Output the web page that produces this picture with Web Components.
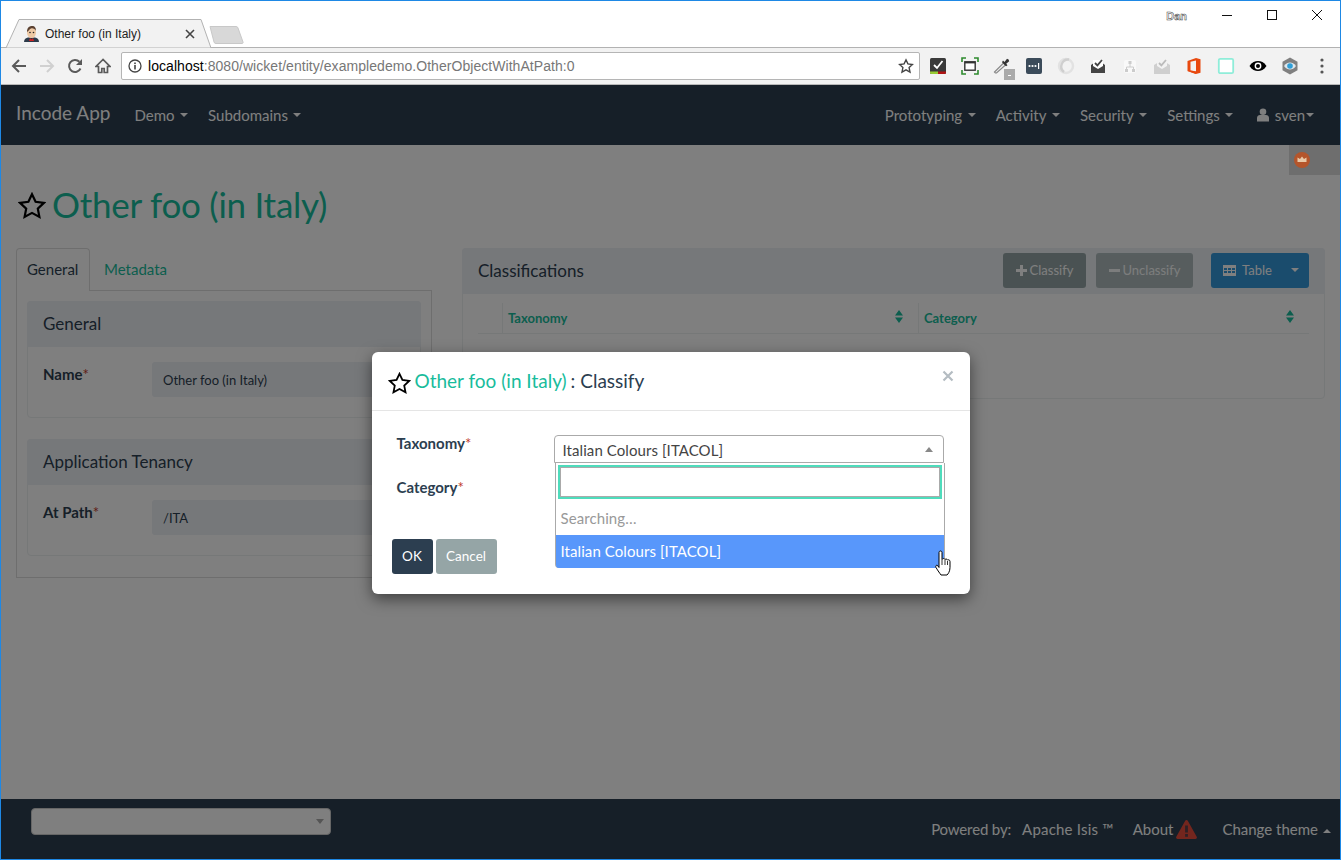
<!DOCTYPE html>
<html>
<head>
<meta charset="utf-8">
<title>Other foo (in Italy)</title>
<style>
    html, body { margin: 0; height: 100%; }
    body { font-family: Lato, "Liberation Sans", sans-serif; font-size: 15px; color: #2c3e50; overflow: hidden; }
</style>
</head>
<body>
<app-window>
    <browser-chrome slot="chrome"></browser-chrome>
    <isis-page>
        <isis-navbar slot="nav"></isis-navbar>
        <entity-title slot="title">Other foo (in Italy)</entity-title>
        <entity-tabs slot="left">
            <field-panel heading="General" label="Name" value="Other foo (in Italy)"></field-panel>
            <field-panel heading="Application Tenancy" label="At Path" value="/ITA"></field-panel>
        </entity-tabs>
        <classifications-panel slot="right"></classifications-panel>
        <isis-footer slot="footer"></isis-footer>
        <classify-modal slot="modal"></classify-modal>
        <corner-tag slot="corner"></corner-tag>
    </isis-page>
</app-window>

<script>
const STAR = '<svg viewBox="0 0 28 27" style="display:block;width:100%;height:100%"><path d="M14 2.2l3.6 7.6 8.3 1.1-6.1 5.8 1.6 8.2-7.4-4-7.4 4 1.6-8.2-6.1-5.8 8.3-1.1z" fill="none" stroke="currentColor" stroke-width="2.2" stroke-linejoin="miter"/></svg>';

customElements.define('app-window', class extends HTMLElement {
    constructor() {
        super();
        this.attachShadow({ mode: 'open' }).innerHTML = `
            <style>
                :host { display: flex; flex-direction: column; box-sizing: border-box; width: 1341px; height: 860px; border: 1px solid #1e88e5; background: #fff; }
                ::slotted(isis-page) { flex: 1; min-height: 0; }
            </style>
            <slot name="chrome"></slot>
            <slot></slot>
        `;
    }
});

customElements.define('browser-chrome', class extends HTMLElement {
    constructor() {
        super();
        const ext = [
            // check tile
            '<rect x="2" y="2" width="16" height="16" rx="1.5" fill="#3a3a3a"/><path d="M2 15.5h8V18H3.5A1.5 1.5 0 0 1 2 16.5z" fill="#9c3"/><path d="M10 15.5h8v1a1.5 1.5 0 0 1-1.5 1.5H10z" fill="#b01515"/><path d="M6 9l3 3 5.5-7" fill="none" stroke="#fff" stroke-width="1.8"/>',
            // fullscreen frame
            '<path d="M2 6V2h4M14 2h4v4M18 14v4h-4M6 18H2v-4" fill="none" stroke="#2e8b2e" stroke-width="1.6"/><rect x="4.8" y="5.8" width="10.4" height="8.4" fill="#fff" stroke="#333" stroke-width="1.4"/><rect x="4.8" y="5.8" width="10.4" height="1.6" fill="#333"/>',
            // eyedropper with badge
            '<path d="M3.5 17l-1-1 9-9 2 2-9 8z" fill="#eee" stroke="#888" stroke-width="1.2"/><path d="M11 4.5l1.5 1.5 2.5-3.2 1.6.8.6 1.6-3 2.6 1.3 1.4-1.5 1-4-4z" fill="#333"/><rect x="12" y="13" width="11" height="11" fill="#aaa"/><rect x="16" y="19" width="3" height="1" fill="#fff"/>',
            // dots tile
            '<rect x="2" y="2" width="16" height="16" rx="2" fill="#3b4b5a"/><circle cx="5.5" cy="10" r="1.1" fill="#fff"/><circle cx="8.5" cy="10" r="1.1" fill="#fff"/><circle cx="11.5" cy="10" r="1.1" fill="#fff"/><rect x="14" y="7" width="1.2" height="6" fill="#fff"/>',
            // pale swirl
            '<circle cx="10" cy="10" r="7" fill="none" stroke="#e2e2e2" stroke-width="2.4"/><path d="M13 3.5A7 7 0 0 0 8 16" fill="none" stroke="#cfcfcf" stroke-width="2.4"/>',
            // open envelope dark
            '<path d="M3 9l7-5 7 5v8H3z" fill="#444"/><path d="M5 4h10v6l-5 3-5-3z" fill="#fff"/><path d="M7 7l2.4 2.4L14 4" fill="none" stroke="#444" stroke-width="1.8"/>',
            // pale sitemap
            '<rect x="4" y="4" width="12" height="13" rx="2" fill="#f9f9f9"/><path d="M10 8v3M6.5 14v-3h7v3" fill="none" stroke="#ccc"/><rect x="8.5" y="5" width="3" height="3" fill="#ccc"/><rect x="5" y="13" width="3" height="3" fill="#ccc"/><rect x="12" y="13" width="3" height="3" fill="#ccc"/>',
            // pale envelope
            '<path d="M2 9l8-5 8 5v9H2z" fill="#cfcfcf"/><path d="M5 4h10v6l-5 3-5-3z" fill="#f2f2f2"/><path d="M7 7l2.4 2.4L14 4" fill="none" stroke="#bbb" stroke-width="1.8"/>',
            // office
            '<path d="M3.5 5L12 2l4.5 1.2v13.6L12 18l-8.5-3z" fill="#e8490f"/><path d="M6.5 5.8L12 4.6v10.8l-5.5-1.2z" fill="#f2f2f2"/><path d="M3.5 15l8.5 3v-2.6z" fill="#e8490f"/>',
            // teal square
            '<rect x="2.8" y="2.8" width="14.4" height="14.4" rx="1.5" fill="#fff" stroke="#8fedd9" stroke-width="1.8"/>',
            // black eye
            '<path d="M1.5 10C4 6.2 7 5 10 5s6 1.2 8.500 5C16 13.800 13 15 10 15s-6-1.200-8.500-5z" fill="#000"/><circle cx="10" cy="10" r="3.4" fill="#fff"/><circle cx="10" cy="10" r="2" fill="#000"/>',
            // hexagon eye
            '<path d="M10 1.500l7.500 4.200v8.600L10 18.500l-7.500-4.200V5.700z" fill="#808080"/><path d="M4 10c2-2.600 4-3.500 6-3.500s4 .9 6 3.500c-2 2.600-4 3.500-6 3.500S6 12.600 4 10z" fill="#dfe8ee"/><circle cx="10" cy="10" r="2.800" fill="#2f9fd8"/>',
            // menu dots
            '<circle cx="10" cy="4" r="1.600" fill="#555"/><circle cx="10" cy="10" r="1.600" fill="#555"/><circle cx="10" cy="16" r="1.600" fill="#555"/>'
        ].map(s => `<span class="ext"><svg viewBox="0 0 20 20" width="20" height="20" style="overflow:visible">${s}</svg></span>`).join('');

        this.attachShadow({ mode: 'open' }).innerHTML = `
            <style>
                :host { display: block; font-family: "Liberation Sans", Arial, sans-serif; }
                .strip { display: flex; height: 47px; box-sizing: border-box; border-bottom: 1px solid #b2b2b2; align-items: flex-end; position: relative; }
                .tab { position: relative; box-sizing: border-box; width: 206px; height: 29px; margin-left: 4px; margin-bottom: -1px; display: flex; align-items: center; padding: 0 16px 0 19px; font-size: 12px; color: #222; }
                .tab > svg.bg { position: absolute; left: 0; top: 0; }
                .fav { position: relative; width: 15px; height: 16px; margin-right: 6px; }
                .title { position: relative; flex: 1; white-space: nowrap; }
                .close { position: relative; width: 10px; height: 10px; }
                .newtab { margin-left: -2px; margin-bottom: 3px; display: block; }
                .winbar { position: absolute; top: 0; right: 1px; height: 28px; display: flex; align-items: center; }
                .user { font-size: 11px; font-weight: 700; color: #fff; -webkit-text-stroke: .5px #444; margin-right: 17px; margin-top: 2px; }
                .win { width: 45px; height: 28px; display: flex; align-items: center; justify-content: center; }
                .tools { display: flex; align-items: center; height: 37px; box-sizing: border-box; background: #f2f2f2; padding: 0 2px 0 4px; border-bottom: 1px solid #b8b8b8; }
                .btn { width: 28px; height: 28px; display: flex; align-items: center; justify-content: center; }
                .omni { flex: 1; height: 28px; box-sizing: border-box; margin: 0 2px 0 4px; background: #fff; border: 1px solid #b5b5b5; border-radius: 2px; display: flex; align-items: center; padding: 0 5px 0 6px; font-size: 14px; color: #777; }
                .omni b { font-weight: 400; color: #000; }
                .omni .url { flex: 1; margin-left: 6px; white-space: nowrap; letter-spacing: .05px; }
                .ext { width: 32px; height: 32px; display: flex; align-items: center; justify-content: center; }
            </style>
            <div class="strip">
                <div class="tab">
                    <svg class="bg" width="206" height="29" viewBox="0 0 206 29"><path d="M1 29L14 .5H196L206 29z" fill="#f2f2f2" stroke="#b2b2b2"/><path d="M0 29.500H206" stroke="#f2f2f2"/></svg>
                    <svg class="fav" viewBox="0 0 15 16"><path d="M0 16c0-3 2-4 4-4.500h7c2 .5 4 1.500 4 4.500z" fill="#2c3a4a"/><path d="M6 12l1.500 1.500L9 12l1 3H5z" fill="#c22"/><ellipse cx="7.500" cy="6.500" rx="4.500" ry="5.500" fill="#eec9a5"/><path d="M3 6c0-4 2-6 5-6s4 2 4 5c-1-2-3-3-5-2.500C5.500 3 5 5 3 6z" fill="#5a4030"/><circle cx="6" cy="6.500" r=".8" fill="#222"/><circle cx="9.500" cy="6.500" r=".8" fill="#222"/></svg>
                    <span class="title">Other foo (in Italy)</span>
                    <svg class="close" viewBox="0 0 10 10"><path d="M1 1l8 8M9 1L1 9" stroke="#444" stroke-width="1.600"/></svg>
                </div>
                <svg class="newtab" width="36" height="18" viewBox="0 0 36 18"><path d="M1 .5H27a2 2 0 0 1 2 1.500L34 16a1 1 0 0 1-1 1.500H7a2 2 0 0 1-2-1.500z" fill="#d8d8d8" stroke="#c8c8c8"/></svg>
                <div class="winbar">
                    <span class="user">Dan</span>
                    <span class="win"><svg width="12" height="12" viewBox="0 0 12 12"><path d="M1 6.500h10" stroke="#111"/></svg></span>
                    <span class="win"><svg width="12" height="12" viewBox="0 0 12 12"><rect x="1.500" y="1.500" width="9" height="9" fill="none" stroke="#111"/></svg></span>
                    <span class="win"><svg width="12" height="12" viewBox="0 0 12 12"><path d="M1 1l10 10M11 1L1 11" stroke="#111"/></svg></span>
                </div>
            </div>
            <div class="tools">
                <span class="btn"><svg width="16" height="16" viewBox="0 0 16 16"><path d="M15 8H2M8 2L2 8l6 6" fill="none" stroke="#5a5a5a" stroke-width="2"/></svg></span>
                <span class="btn"><svg width="16" height="16" viewBox="0 0 16 16"><path d="M1 8h13M8 2l6 6-6 6" fill="none" stroke="#d0d0d0" stroke-width="2"/></svg></span>
                <span class="btn"><svg width="16" height="16" viewBox="0 0 16 16"><path d="M13.500 10.500A6 6 0 1 1 12.400 3.800" fill="none" stroke="#5a5a5a" stroke-width="2"/><path d="M15 1v6H9z" fill="#5a5a5a"/></svg></span>
                <span class="btn"><svg width="16" height="16" viewBox="0 0 16 16"><path d="M8 1.500L1 8.500h2.500v6h3.300v-4h2.400v4h3.300v-6H15z" fill="none" stroke="#5a5a5a" stroke-width="1.700"/></svg></span>
                <div class="omni">
                    <svg width="14" height="14" viewBox="0 0 14 14"><circle cx="7" cy="7" r="6" fill="none" stroke="#444" stroke-width="1.300"/><rect x="6.200" y="6" width="1.600" height="4.500" fill="#444"/><rect x="6.200" y="3.500" width="1.600" height="1.600" fill="#444"/></svg>
                    <span class="url"><b>localhost</b>:8080/wicket/entity/exampledemo.OtherObjectWithAtPath:0</span>
                    <svg width="16" height="16" viewBox="0 0 16 16"><path d="M8 1.800l1.900 4.100 4.500.6-3.300 3.100.9 4.500L8 11.900l-4 2.200.9-4.500-3.300-3.100 4.500-.6z" fill="none" stroke="#444" stroke-width="1.400"/></svg>
                </div>
                ${ext}
            </div>
        `;
    }
});

customElements.define('isis-page', class extends HTMLElement {
    constructor() {
        super();
        this.attachShadow({ mode: 'open' }).innerHTML = `
            <style>
                :host { display: flex; flex-direction: column; position: relative; background: #fff; }
                .main { flex: 1; padding: 40px 15px 0; }
                .cols { display: grid; grid-template-columns: 416px 863px; column-gap: 30px; align-items: start; }
                .backdrop { position: absolute; inset: 0; background: rgba(0, 0, 0, .5); display: flex; justify-content: center; padding-top: 267px; }
                .corner { position: absolute; right: 0; top: 60px; }
            </style>
            <slot name="nav"></slot>
            <div class="main">
                <slot name="title"></slot>
                <div class="cols">
                    <slot name="left"></slot>
                    <slot name="right"></slot>
                </div>
            </div>
            <slot name="footer"></slot>
            <div class="backdrop"><slot name="modal"></slot></div>
            <div class="corner"><slot name="corner"></slot></div>
        `;
    }
});

customElements.define('nav-item', class extends HTMLElement {
    constructor() {
        super();
        this.attachShadow({ mode: 'open' }).innerHTML = `
            <style>
                :host { display: inline-flex; align-items: center; padding: 0 10px; color: #fff; font-size: 15px; white-space: nowrap; }
                .caret { margin-left: 5.500px; width: 0; height: 0; border: 4px solid transparent; border-top-color: currentColor; border-bottom: 0; }
                :host([tight]) { margin-left: 3.500px; padding-right: 11px; }
                :host([tight]) .caret { margin-left: 1px; }
            </style>
            <slot></slot><span class="caret"></span>
        `;
    }
});

customElements.define('isis-navbar', class extends HTMLElement {
    constructor() {
        super();
        this.attachShadow({ mode: 'open' }).innerHTML = `
            <style>
                :host { display: flex; align-items: center; height: 60px; background: #2c3e50; padding: 0 15px; box-sizing: border-box; flex: none; }
                .brand { color: #fff; font-size: 19px; margin-right: 14px; position: relative; top: -3px; }
                .sp { flex: 1; }
                svg { margin-right: 6px; }
            </style>
            <span class="brand">Incode App</span>
            <nav-item>Demo</nav-item>
            <nav-item>Subdomains</nav-item>
            <span class="sp"></span>
            <nav-item>Prototyping</nav-item>
            <nav-item>Activity</nav-item>
            <nav-item>Security</nav-item>
            <nav-item>Settings</nav-item>
            <nav-item tight><svg width="12" height="14" viewBox="0 0 12 14"><circle cx="6" cy="3.800" r="3.300" fill="#fff"/><path d="M0 13.500V10c0-2 1.500-3 3-3h6c1.500 0 3 1 3 3v3.500z" fill="#fff"/></svg>sven</nav-item>
        `;
    }
});

customElements.define('entity-title', class extends HTMLElement {
    constructor() {
        super();
        this.attachShadow({ mode: 'open' }).innerHTML = `
            <style>
                :host { display: flex; align-items: center; box-sizing: border-box; height: 40px; padding-bottom: 2px; margin-bottom: 23px; font-size: 35px; letter-spacing: -.25px; color: #18bc9c; white-space: nowrap; }
                .star { width: 28px; height: 27px; margin: 2px 6px 0 2px; color: #000; }
            </style>
            <span class="star">${STAR}</span><slot></slot>
        `;
    }
});

customElements.define('entity-tabs', class extends HTMLElement {
    constructor() {
        super();
        this.attachShadow({ mode: 'open' }).innerHTML = `
            <style>
                :host { display: block; }
                .tabs { display: flex; height: 42px; }
                .tab { box-sizing: border-box; width: 74px; height: 43px; padding: 0 10px 2px; display: flex; align-items: center; background: #fff; border: 1px solid #ddd; border-bottom: 0; border-radius: 4px 4px 0 0; position: relative; }
                .tab.off { width: auto; background: none; border-color: transparent; color: #18bc9c; margin-left: 3px; }
                .pane { border: 1px solid #ddd; padding: 10px 10px 21px; display: flex; flex-direction: column; gap: 21px; }
            </style>
            <div class="tabs"><span class="tab">General</span><span class="tab off">Metadata</span></div>
            <div class="pane"><slot></slot></div>
        `;
    }
});

customElements.define('field-panel', class extends HTMLElement {
    constructor() {
        super();
        this.attachShadow({ mode: 'open' }).innerHTML = `
            <style>
                :host { display: block; border: 1px solid #ecf0f1; border-radius: 4px; }
                .head { box-sizing: border-box; margin: -1px -1px 0; padding: 0 16px 2px; display: flex; align-items: center; background: #ecf0f4; border-radius: 4px 4px 0 0; font-size: 17px; height: 46px; }
                .row { display: flex; padding: 15px 10px 20px 15px; }
                label { width: 109px; font-weight: 700; margin-top: 2px; line-height: 20px; }
                label i { color: #c0392b; font-style: normal; font-weight: 400; }
                .input { flex: 1; height: 35px; box-sizing: border-box; background: #ecf0f4; border-radius: 3px; padding: 0 11px; display: flex; align-items: center; font-size: 13px; }
            </style>
            <div class="head">${this.getAttribute('heading')}</div>
            <div class="row">
                <label>${this.getAttribute('label')}<i>*</i></label>
                <div class="input">${this.getAttribute('value')}</div>
            </div>
        `;
    }
});

customElements.define('action-button', class extends HTMLElement {
    constructor() {
        super();
        this.attachShadow({ mode: 'open' }).innerHTML = `
            <style>
                :host { display: inline-flex; align-items: center; justify-content: center; box-sizing: border-box; height: 35px; background: var(--bg, #95a5a6); color: #fff; border-radius: 3px; font-size: 13px; white-space: nowrap; opacity: var(--op, 1); padding: var(--pad, 0 13px); }
            </style>
            <slot></slot>
        `;
    }
});

customElements.define('classifications-panel', class extends HTMLElement {
    constructor() {
        super();
        const sort = '<svg width="8" height="13" viewBox="0 0 8 13"><path d="M4 0l4 5.500H0zM4 13L0 7.500h8z" fill="#18bc9c"/></svg>';
        this.attachShadow({ mode: 'open' }).innerHTML = `
            <style>
                :host { display: block; height: 151px; box-sizing: border-box; border: 1px solid #ecf0f1; border-radius: 4px; }
                .head { box-sizing: border-box; display: flex; align-items: center; height: 46px; margin: -1px -1px 0; padding: 0 16px 2px; background: #ecf0f4; border-radius: 4px 4px 0 0; font-size: 17px; }
                .title { flex: 1; }
                .gap { width: 10px; } .gap2 { width: 18px; }
                .ico { margin-right: 3px; flex: none; }
                .table { margin: 9px 15px 0; height: 30px; display: grid; grid-template-columns: 24px 416px 1fr; border-bottom: 1px solid #ecf0f1; }
                .th { border-left: 1px solid #ecf0f1; padding: 0 15px 0 5px; color: #18bc9c; font-size: 13px; font-weight: 700; display: flex; justify-content: space-between; align-items: center; }
                .th svg { margin-top: -3px; }
                .th:first-child { border: 0; }
            </style>
            <div class="head">
                <span class="title">Classifications</span>
                <action-button style="--pad:0;width:83px"><svg class="ico" width="11" height="11" viewBox="0 0 11 11"><path d="M4 0h3v4h4v3H7v4H4V7H0V4h4z" fill="#fff"/></svg>Classify</action-button>
                <span class="gap"></span>
                <action-button style="--op:.7;--pad:0;width:97px"><svg class="ico" width="11" height="11" viewBox="0 0 11 11"><path d="M0 4h11v3H0z" fill="#fff"/></svg>Unclassify</action-button>
                <span class="gap2"></span>
                <action-button style="--bg:#3498db;--pad:0 0 0 12px;width:98px;justify-content:flex-start"><svg class="ico" style="margin-right:6px" width="13" height="11" viewBox="0 0 13 11"><path d="M0 0h13v11H0zM1 3v2h3V3zm4 0v2h3V3zm4 0v2h3V3zM1 6v2h3V6zm4 0v2h3V6zm4 0v2h3V6z" fill="#fff" fill-rule="evenodd"/></svg>Table<span style="margin-left:19px;border:4px solid transparent;border-top-color:#fff;border-bottom:0"></span></action-button>
            </div>
            <div class="table">
                <div class="th"></div>
                <div class="th"><span>Taxonomy</span>${sort}</div>
                <div class="th"><span>Category</span>${sort}</div>
            </div>
        `;
    }
});

customElements.define('isis-footer', class extends HTMLElement {
    constructor() {
        super();
        this.attachShadow({ mode: 'open' }).innerHTML = `
            <style>
                :host { display: flex; align-items: center; height: 60px; flex: none; box-sizing: border-box; background: #2c3e50; padding: 0 9px 0 30px; color: #fff; font-size: 15px; white-space: nowrap; }
                .sel { width: 300px; height: 27px; box-sizing: border-box; margin-top: -16px; background: #fff; border: 1px solid #ccc; border-radius: 4px; display: flex; align-items: center; justify-content: flex-end; padding-right: 6px; }
                .sel i { border: 4px solid transparent; border-top: 5px solid #aaa; border-bottom: 0; }
                .sp { flex: 1; }
                .pw { letter-spacing: -.15px; }
                .a { margin-left: 11px; letter-spacing: .2px; }
                .about { margin-left: 19px; }
                .warn { margin-left: 3px; display: block; }
                .theme { margin-left: 25px; }
                .up { display: inline-block; margin-left: 5px; vertical-align: middle; border: 4px solid transparent; border-bottom-color: #fff; border-top: 0; }
            </style>
            <div class="sel"><i></i></div>
            <span class="sp"></span>
            <span class="pw">Powered by:</span>
            <span class="a">Apache Isis ™</span>
            <span class="about">About</span>
            <svg class="warn" width="21" height="19" viewBox="0 0 21 19"><path d="M10.500 0a1.500 1.500 0 0 1 1.300.8l8.900 16a1.500 1.500 0 0 1-1.300 2.200H1.600a1.500 1.500 0 0 1-1.300-2.200l8.900-16A1.500 1.500 0 0 1 10.500 0z" fill="#e74c3c" /><rect x="9.100" y="5.500" width="2.800" height="7" fill="#2c3e50" opacity=".75"/><rect x="9.100" y="14" width="2.800" height="2.800" fill="#2c3e50" opacity=".75"/></svg>
            <span class="theme">Change theme<i class="up"></i></span>
        `;
    }
});

customElements.define('select-drop', class extends HTMLElement {
    constructor() {
        super();
        this.attachShadow({ mode: 'open' }).innerHTML = `
            <style>
                :host { display: block; position: relative; align-self: start; letter-spacing: .08px; }
                .sel { box-sizing: border-box; height: 28px; border: 1px solid #aaa; border-radius: 4px 4px 0 0; background: #fff; display: flex; align-items: center; justify-content: space-between; padding: 1px 8px 0; color: #444; font-size: 15px; }
                .sel i { border: 4px solid transparent; border-bottom: 5px solid #888; border-top: 0; margin-right: 2px; }
                .drop { position: absolute; left: 1px; top: 100%; width: 390px; height: 105px; box-sizing: border-box; background: #fff; border: 1px solid #aaa; border-top: 0; border-radius: 0 0 4px 4px; color: #444; font-size: 15px; }
                .search { box-sizing: border-box; height: 34px; margin: 2px 2px 0; border: 2px solid #4fdcbc; box-shadow: inset 0 0 0 1px #aaa; }
                .msg { box-sizing: border-box; height: 36px; display: flex; align-items: center; padding: 2px 5px 0; color: #999; }
                .opt { box-sizing: border-box; height: 33px; display: flex; align-items: center; padding: 0 5px 2px; background: #5897fb; color: #fff; border-radius: 0 0 3px 3px; }
                .hand { position: absolute; left: 379px; top: 87px; }
            </style>
            <div class="sel"><span><slot></slot></span><i></i></div>
            <div class="drop">
                <div class="search"></div>
                <div class="msg">Searching…</div>
                <div class="opt"><slot name="option"></slot></div>
                <svg class="hand" width="16" height="26" viewBox="0 0 16 26"><path d="M4 2.500c0-2 3-2 3 0v7l.5-.5c.8-.8 2-.5 2.500.5.800-.8 2-.5 2.500.5.800-.5 2.500-.2 2.500 1.500v6c0 4-2 6.500-3 7.500H6c-1-1.500-3-4-5-7.500-1-2 1-3 2-1.500l1 1.500z" fill="#fff" stroke="#000" stroke-width="1" stroke-linejoin="round"/><path d="M7 10v5M10 10v5M12.500 11v4" stroke="#000" fill="none" stroke-width=".8"/></svg>
            </div>
        `;
    }
});

customElements.define('classify-modal', class extends HTMLElement {
    constructor() {
        super();
        this.attachShadow({ mode: 'open' }).innerHTML = `
            <style>
                :host { display: block; width: 598px; height: 242px; box-sizing: border-box; background: #fff; border-radius: 6px; box-shadow: 0 5px 15px rgba(0,0,0,.5); }
                .head { height: 59px; box-sizing: border-box; border-bottom: 1px solid #e5e5e5; display: flex; align-items: center; padding: 0 16px 2px; font-size: 19px; position: relative; white-space: nowrap; }
                .star { width: 23px; height: 22px; margin: 5px 4px 0 0; color: #000; }
                a { color: #18bc9c; text-decoration: none; margin-right: 4px; }
                .x { position: absolute; right: 16px; width: 12px; height: 12px; top: 18px; }
                .form { display: grid; grid-template-columns: 157px 390px; grid-auto-rows: 44px; padding: 24px 0 0 25px; }
                label { font-weight: 700; line-height: 20px; margin-top: -2px; }
                label i { color: #c0392b; font-style: normal; font-weight: 400; }
                .btns { display: flex; gap: 3px; padding: 16px 20px 0; }
            </style>
            <div class="head">
                <span class="star">${STAR}</span><a>Other foo (in Italy)</a>: Classify
                <svg class="x" viewBox="0 0 12 12"><path d="M1.500 1.500l9 9M10.500 1.500l-9 9" stroke="#b4bcc2" stroke-width="2.200"/></svg>
            </div>
            <div class="form">
                <label>Taxonomy<i>*</i></label>
                <select-drop>Italian Colours [ITACOL]<span slot="option">Italian Colours [ITACOL]</span></select-drop>
                <label>Category<i>*</i></label>
                <span></span>
            </div>
            <div class="btns">
                <action-button style="--bg:#2c3e50;--pad:0 0 2px;width:41px;font-size:13.500px">OK</action-button>
                <action-button style="--pad:0 0 2px;width:61px;font-size:13.500px">Cancel</action-button>
            </div>
        `;
    }
});

customElements.define('corner-tag', class extends HTMLElement {
    constructor() {
        super();
        this.attachShadow({ mode: 'open' }).innerHTML = `
            <style>
                :host { display: flex; align-items: center; width: 51px; height: 30px; padding-left: 5px; box-sizing: border-box; background: #6e6e6e; }
            </style>
            <svg width="16" height="16" viewBox="0 0 16 16"><circle cx="8" cy="8" r="8" fill="#b4552b"/><path d="M3.500 5.500l2.500 1.500L8 4.500 10 7l2.500-1.500V10h-9z" fill="#e8c9a8"/></svg>
        `;
    }
});
</script>
</body>
</html>
